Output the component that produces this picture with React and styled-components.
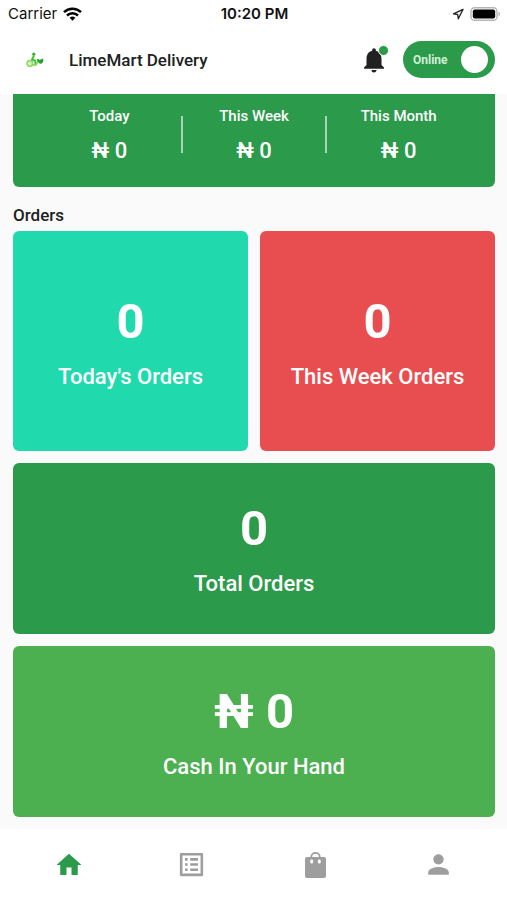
import React, { useState } from 'react';
import styled, { createGlobalStyle } from 'styled-components';
import { MdHome, MdListAlt, MdNotifications, MdPerson } from 'react-icons/md';

const GlobalStyle = createGlobalStyle`
  * {
    box-sizing: border-box;
  }
  body {
    margin: 0;
    background: #fafafa;
    color: #212121;
    font-family: Roboto, "Noto Sans", sans-serif;
  }
`;

const Screen = styled.div`
  display: flex;
  flex-direction: column;
  min-height: 100vh;
`;

const StatusBar = styled.div`
  display: grid;
  grid-template-columns: 1fr auto 1fr;
  align-items: center;
  height: 27px;
  padding: 0 6px 0 8px;
  background: #fff;
  color: #111;
  font-family: Inter, sans-serif;
  font-size: 15px;
`;

const StatusGroup = styled.div`
  display: flex;
  align-items: center;
  justify-content: ${({ $end }) => ($end ? 'flex-end' : 'flex-start')};
  gap: 6px;
`;

const Clock = styled.time`
  font-weight: 600;
`;

const Header = styled.header`
  display: flex;
  align-items: center;
  height: 67px;
  padding: 0 12px 2px 24px;
  background: #fff;
`;

const Title = styled.h1`
  flex: 1;
  margin: 0 0 0 23px;
  font-size: 17px;
  font-weight: 500;
`;

const BellButton = styled.button`
  position: relative;
  display: flex;
  margin-right: 14px;
  padding: 0;
  border: 0;
  background: none;
  color: #212121;
`;

const BellDot = styled.span`
  position: absolute;
  top: 0;
  right: 0;
  width: 11px;
  height: 11px;
  border: 1px solid #fff;
  border-radius: 50%;
  background: #2b9a4a;
`;

const Switch = styled.label`
  display: flex;
  align-items: center;
  justify-content: space-between;
  width: 92px;
  height: 37px;
  padding: 0 7px 0 10px;
  border-radius: 19px;
  background: ${({ $on }) => ($on ? '#2b9a4a' : '#9e9e9e')};
  color: #d0f0d8;
  font-size: 12px;
  font-weight: 700;
`;

const SwitchInput = styled.input`
  appearance: none;
  width: 27px;
  height: 27px;
  margin: 0;
  border-radius: 50%;
  background: #fff;
`;

const Main = styled.main`
  flex: 1;
  padding: 0 12px 12px 13px;
`;

const Earnings = styled.section`
  display: flex;
  padding: 11px 24px 22px;
  border-radius: 0 0 6px 6px;
  background: #2b9a4a;
  color: #fff;
`;

const Earning = styled.div`
  display: flex;
  flex: 1;
  flex-direction: column;
  align-items: center;
  gap: 10px;
`;

const EarningLabel = styled.span`
  font-size: 15px;
  font-weight: 500;
  line-height: 22px;
`;

const EarningAmount = styled.span`
  font-size: 22px;
  font-weight: 500;
  line-height: 28px;
`;

const Divider = styled.div`
  width: 2px;
  height: 37px;
  margin: 11px -1px 0;
  background: #a5d6b1;
`;

const SectionTitle = styled.h2`
  margin: 0;
  padding: 16px 0 4px;
  font-size: 17px;
  font-weight: 500;
  line-height: 24px;
`;

const Cards = styled.div`
  display: grid;
  grid-template-columns: 1fr 1fr;
  gap: 12px;
`;

const Card = styled.div`
  grid-column: ${({ $wide }) => ($wide ? '1 / -1' : 'auto')};
  display: flex;
  flex-direction: column;
  align-items: center;
  gap: 12px;
  padding: ${({ $wide }) => ($wide ? '38px 12px 35px' : '63px 12px 59px')};
  border-radius: 6px;
  background: ${({ $color }) => $color};
  color: #fff;
`;

const CardValue = styled.span`
  font-size: 49px;
  font-weight: 700;
  line-height: 56px;
`;

const CardLabel = styled.span`
  font-size: 22px;
  font-weight: 500;
  line-height: 30px;
  text-align: center;
`;

const TabBar = styled.nav`
  display: flex;
  height: 71px;
  padding: 0 7px;
  background: #fff;
`;

const Tab = styled.a`
  display: flex;
  flex: 1;
  align-items: center;
  justify-content: center;
  color: ${({ $active }) => ($active ? '#2b9a4a' : '#9e9e9e')};
`;

const earnings = [
  { label: 'Today', amount: '₦ 0' },
  { label: 'This Week', amount: '₦ 0' },
  { label: 'This Month', amount: '₦ 0' },
]

const cards = [
  { label: "Today's Orders", value: '0', color: '#20d9ad' },
  { label: 'This Week Orders', value: '0', color: '#e84e50' },
  { label: 'Total Orders', value: '0', color: '#2b9a4a', wide: true },
  { label: 'Cash In Your Hand', value: '₦ 0', color: '#4caf50', wide: true },
]

const tabs = [
  { name: 'Home', icon: <MdHome size={30} /> },
  { name: 'Orders', icon: <MdListAlt size={31} /> },
  { name: 'Products', icon: <BagIcon /> },
  { name: 'Profile', icon: <MdPerson size={31} /> },
]

function WifiIcon() {
  return (
    <svg width="19" height="14" viewBox="0 0 19 14" fill="none" stroke="#000" strokeWidth="2.5">
      <path d="M1 5.2a12.2 12.2 0 0 1 17 0" />
      <path d="M4 8.5a7.9 7.9 0 0 1 11 0" />
      <path d="M9.5 13.8 6.6 10.8a4.2 4.2 0 0 1 5.8 0z" fill="#000" stroke="none" />
    </svg>
  )
}

function LocationIcon() {
  return (
    <svg width="12" height="12" viewBox="0 0 12 12" fill="none" stroke="#222" strokeWidth="1.3" strokeLinejoin="round">
      <path d="M11 1.4 1.4 5.8l4.3.7.6 4.300z" />
    </svg>
  )
}

function BatteryIcon() {
  return (
    <svg width="31" height="14" viewBox="0 0 31 14">
      <rect x="1" y="0.7" width="26" height="12.6" rx="3.6" fill="#fff" stroke="#b5b5b5" strokeWidth="1.4" />
      <rect x="2.8" y="2.4" width="22.4" height="9.2" rx="2" fill="#000" />
      <path d="M28.5 4.8c2 .6 2 3.8 0 4.4z" fill="#b5b5b5" />
    </svg>
  )
}

// courier on a scooter
function Logo() {
  return (
    <svg width="22" height="20" viewBox="0 0 22 20" fill="none" strokeLinecap="round" strokeLinejoin="round">
      <circle cx="5.8" cy="13.4" r="2.8" stroke="#8fdc6a" strokeWidth="1.6" fill="#d6f5b8" />
      <circle cx="9.8" cy="4.2" r="1.6" fill="#35b52c" />
      <path d="M9.600 6.400 8 9.500l3.200 1.300.4 3" stroke="#3fc233" strokeWidth="2" />
      <path d="M8.600 15h3.400l2-3.600" stroke="#7ad650" strokeWidth="1.400" />
      <path d="M12.600 9.200c1.600-.6 2.400.6 3.400.6l3.200-1.300c.6 2.800-.4 5-2.200 5.200-1.800 0-3.400-1.800-4.400-4.500z" fill="#1fa32b" />
    </svg>
  )
}

function BagIcon() {
  return (
    <svg width="21" height="26" viewBox="0 0 21 26">
      <path d="M6.2 6V5.200a4.300 4.300 0 0 1 8.600 0V6" fill="none" stroke="currentColor" strokeWidth="1.900" />
      <path
        fillRule="evenodd"
        fill="currentColor"
        d="M2 5h17a2 2 0 0 1 2 2v17a2 2 0 0 1-2 2H2a2 2 0 0 1-2-2V7a2 2 0 0 1 2-2zm4.700 2.400c-.8 0-1.500.7-1.500 1.500V10a1.500 1.500 0 0 0 3 0V8.900c0-.8-.7-1.500-1.500-1.500zm7.600 0c-.8 0-1.500.7-1.500 1.500V10a1.500 1.500 0 0 0 3 0V8.900c0-.8-.7-1.500-1.500-1.500z"
      />
    </svg>
  )
}

function App() {
  const [online, setOnline] = useState(true)

  return (
    <Screen>
      <GlobalStyle />
      <StatusBar>
        <StatusGroup>
          Carrier
          <WifiIcon />
        </StatusGroup>
        <Clock>10:20 PM</Clock>
        <StatusGroup $end>
          <LocationIcon />
          <BatteryIcon />
        </StatusGroup>
      </StatusBar>
      <Header>
        <Logo />
        <Title>LimeMart Delivery</Title>
        <BellButton aria-label="Notifications">
          <MdNotifications size={30} />
          <BellDot />
        </BellButton>
        <Switch $on={online}>
          {online ? 'Online' : 'Offline'}
          <SwitchInput
            type="checkbox"
            role="switch"
            checked={online}
            onChange={e => setOnline(e.target.checked)}
          />
        </Switch>
      </Header>
      <Main>
        <Earnings>
          {earnings.map((item, i) => (
            <React.Fragment key={item.label}>
              {i > 0 && <Divider />}
              <Earning>
                <EarningLabel>{item.label}</EarningLabel>
                <EarningAmount>{item.amount}</EarningAmount>
              </Earning>
            </React.Fragment>
          ))}
        </Earnings>
        <SectionTitle>Orders</SectionTitle>
        <Cards>
          {cards.map(card => (
            <Card key={card.label} $color={card.color} $wide={card.wide}>
              <CardValue>{card.value}</CardValue>
              <CardLabel>{card.label}</CardLabel>
            </Card>
          ))}
        </Cards>
      </Main>
      <TabBar>
        {tabs.map((tab, i) => (
          <Tab key={tab.name} href={`#${tab.name.toLowerCase()}`} aria-label={tab.name} $active={i === 0}>
            {tab.icon}
          </Tab>
        ))}
      </TabBar>
    </Screen>
  )
}

export default App
